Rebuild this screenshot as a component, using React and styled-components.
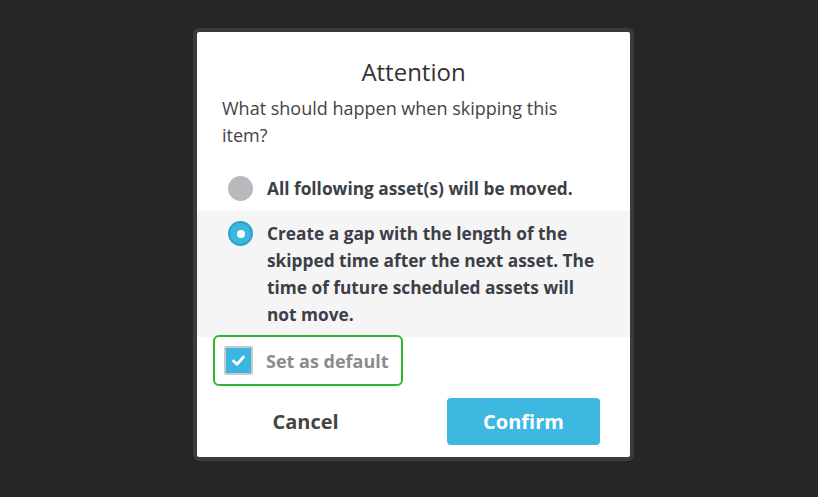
import React, { useState } from 'react'
import styled, { createGlobalStyle } from 'styled-components'

const GlobalStyle = createGlobalStyle`
  html, body {
    margin: 0;
    padding: 0;
    background: #262626;
  }
  body {
    font-family: "Open Sans", "Liberation Sans", sans-serif;
  }
`

const Page = styled.div`
  min-height: 497px;
  padding: 28px 0 0 193px;
  box-sizing: border-box;
`

const Frame = styled.div`
  width: 433px;
  border: 4px solid #3b3b3b;
  border-radius: 6px;
  overflow: hidden;
`

const Panel = styled.div`
  background: #fff;
  padding: 24px 0 12px;
`

const Title = styled.h2`
  margin: 0;
  font-size: 24px;
  line-height: 31px;
  font-weight: 400;
  color: #333;
  text-align: center;
`

const Question = styled.p`
  margin: 8px 40px 17px 25px;
  font-size: 18px;
  line-height: 27px;
  color: #444;
`

const Option = styled.label`
  display: flex;
  align-items: flex-start;
  padding: 9px 28px 9px 31px;
  background: ${(props) => (props['data-selected'] ? '#f5f5f5' : 'transparent')};
  cursor: pointer;
`

const Radio = styled.span`
  flex-shrink: 0;
  width: 25px;
  height: 25px;
  margin-top: 1px;
  border-radius: 50%;
  box-sizing: border-box;
  background: ${(props) => (props['data-checked'] ? '#3bb6e1' : '#b9b9bd')};
  border: ${(props) => (props['data-checked'] ? '2px solid #2f9fcb' : 'none')};
  display: flex;
  align-items: center;
  justify-content: center;

  &::after {
    content: '';
    display: ${(props) => (props['data-checked'] ? 'block' : 'none')};
    width: 8px;
    height: 8px;
    border-radius: 50%;
    background: #fff;
  }
`

const OptionText = styled.span`
  margin-left: 14px;
  font-size: 17.3px;
  line-height: 27px;
  font-weight: 700;
  color: #3b4048;
`

const DefaultBox = styled.label`
  display: flex;
  align-items: center;
  width: 190px;
  height: 51px;
  margin: -2px 0 0 16px;
  padding-left: 9px;
  box-sizing: border-box;
  border: 2.5px solid #2fb42f;
  border-radius: 6px;
  cursor: pointer;
`

const Check = styled.span`
  width: 29px;
  height: 29px;
  box-sizing: border-box;
  border: 2px solid #cacaca;
  border-radius: 2px;
  background: #3bb6e1;
  display: flex;
  align-items: center;
  justify-content: center;
`

const DefaultLabel = styled.span`
  margin-left: 13px;
  font-size: 18px;
  font-weight: 700;
  color: #8c8c8c;
`

const Actions = styled.div`
  display: flex;
  justify-content: space-between;
  margin-top: 12px;
  padding: 0 30px 0 32px;
`

const Button = styled.button`
  width: 153px;
  height: 47px;
  border: none;
  border-radius: 4px;
  font-family: inherit;
  font-size: 20px;
  font-weight: 700;
  cursor: pointer;
  background: ${(props) => (props['data-primary'] ? '#3db8e0' : 'transparent')};
  color: ${(props) => (props['data-primary'] ? '#fff' : '#444')};
`

const OPTIONS = [
  'All following asset(s) will be moved.',
  'Create a gap with the length of the skipped time after the next asset. The time of future scheduled assets will not move.',
]

const App = () => {
  const [selected, setSelected] = useState(1)
  const [isDefault, setIsDefault] = useState(true)

  return (
    <Page>
      <GlobalStyle />
      <Frame>
        <Panel>
          <Title>Attention</Title>
          <Question>What should happen when skipping this item?</Question>
          {OPTIONS.map((text, i) => (
            <Option
              key={i}
              data-selected={selected === i}
              onClick={() => setSelected(i)}
            >
              <Radio data-checked={selected === i} />
              <OptionText>{text}</OptionText>
            </Option>
          ))}
          <DefaultBox onClick={() => setIsDefault(!isDefault)}>
            <Check>
              {isDefault && (
                <svg width="17" height="17" viewBox="0 0 17 17">
                  <path
                    d="M3.5 9 L7 12.2 L13.5 5"
                    fill="none"
                    stroke="#fff"
                    strokeWidth="2.8"
                    strokeLinecap="round"
                    strokeLinejoin="round"
                  />
                </svg>
              )}
            </Check>
            <DefaultLabel>Set as default</DefaultLabel>
          </DefaultBox>
          <Actions>
            <Button>Cancel</Button>
            <Button data-primary>Confirm</Button>
          </Actions>
        </Panel>
      </Frame>
    </Page>
  )
}

export default App
